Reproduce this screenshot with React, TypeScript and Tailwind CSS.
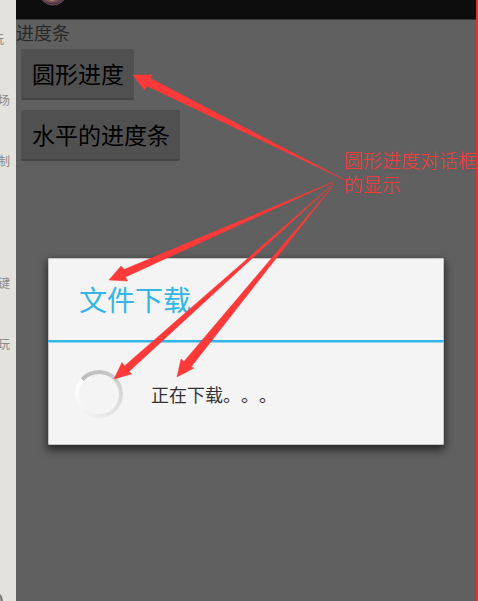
import React from "react";

const sideLinks = [
  { id: 1, label: "玩", shifted: true },
  { id: 2, label: "场", shifted: false },
  { id: 3, label: "制", shifted: false },
  { id: 4, label: "", shifted: false },
  { id: 5, label: "键", shifted: false },
  { id: 6, label: "玩", shifted: false },
];

const arrows = [
  "345,180 150.5,78.5 152,75 133,75 144.5,90 147,86",
  "333,182 124,269.5 121,266 109,280 127.5,281 125.5,277",
  "333,184 124.5,366 122,362.5 114,379 131.5,374 129,371.5",
  "332,187 184,361.5 181,359 177,377 194,368 191,367",
];

const Sidebar = () => {
  return (
    <aside className="relative w-4 shrink-0 overflow-hidden bg-[#e3e2dd] pt-2">
      <ul className="flex flex-col text-xs text-[#8a8a8a]">
        {sideLinks.map((link) => (
          <li
            key={link.id}
            className={`h-[61px] flex justify-end items-center ${
              link.shifted ? "pr-3" : "pr-1.5"
            }`}
          >
            {link.label}
          </li>
        ))}
      </ul>
      <div className="absolute -left-5 -bottom-3 size-[23px] rounded-full border-2 border-[#777777] bg-[#aaaaaa]"></div>
    </aside>
  );
};

const TitleBar = () => {
  return (
    <header className="h-5 shrink-0 bg-[#0d0d0d] border-b border-[#353535] pl-[22px] overflow-hidden">
      <svg
        className="-mt-[22px] block"
        width="30"
        height="28"
        viewBox="0 0 30 28"
        fill="none"
      >
        <circle cx="15" cy="13" r="14" fill="#3c2633" stroke="#71515f" />
        <path d="M4 19a12 9 0 0 0 22 0" stroke="#6b3f5c" strokeWidth="2" />
        <ellipse cx="14" cy="20" rx="8" ry="4" fill="#7c5a50" />
        <ellipse cx="14" cy="21" rx="3" ry="2" fill="#a08078" />
      </svg>
    </header>
  );
};

const Spinner = () => {
  return (
    <div
      role="status"
      aria-label="正在下载"
      className="size-12 shrink-0 rounded-full bg-[conic-gradient(from_-50deg,#bdbdbd,#c6c6c6_20%,#dedede_45%,#ececec_65%,#f6f6f6_80%,#ffffff)] p-1"
    >
      <div className="size-full rounded-full bg-[#f4f4f4]"></div>
    </div>
  );
};

const ProgressDialog = () => {
  return (
    <section
      role="dialog"
      aria-labelledby="dialog-title"
      className="absolute top-[258px] left-8 right-8 rounded-xs bg-[#f4f4f4] shadow-[inset_0_0_0_1px_#c4c4c4,0_4px_9px_1px_rgba(0,0,0,0.6)]"
    >
      <h2
        id="dialog-title"
        className="h-[82px] pl-[31px] flex items-center text-[28px] text-[#33b5e5]"
      >
        文件下载
      </h2>
      <div className="h-[3px] bg-[#33b5e5] border-b border-[#8fd4ee]"></div>
      <div className="h-[102px] pl-[27px] flex items-center gap-7">
        <Spinner />
        <p className="text-lg text-[#333333] [text-spacing-trim:space-all]">
          正在下载。。。
        </p>
      </div>
    </section>
  );
};

const App = () => {
  const buttonStyle =
    "h-[51px] pl-[11px] pr-2.5 rounded-xs bg-[#505050] border-b-2 border-[#444444] text-[23px] text-black";

  return (
    <div className="relative flex min-h-screen overflow-hidden bg-[#606060] font-['Noto_Sans_CJK_SC',sans-serif]">
      <Sidebar />
      <div className="relative flex-1 flex flex-col border-r-2 border-[#e03030]">
        <TitleBar />
        <main className="flex flex-col items-start">
          <h1 className="text-lg leading-6 text-[#292929]">进度条</h1>
          <div className="pl-[5px] pt-[5px] flex flex-col items-start gap-2.5">
            <button type="button" className={buttonStyle}>
              圆形进度
            </button>
            <button type="button" className={buttonStyle}>
              水平的进度条
            </button>
          </div>
        </main>
        <ProgressDialog />
      </div>

      <p className="absolute top-[148px] left-[344px] w-[134px] text-[19px] leading-6 font-light text-[#ff3838]">
        圆形进度对话框的显示
      </p>
      <svg
        className="absolute top-0 left-0 pointer-events-none"
        width="478"
        height="601"
        viewBox="0 0 478 601"
        fill="#fd3939"
        aria-hidden="true"
      >
        {arrows.map((points) => (
          <polygon
            key={points}
            points={points}
            stroke="#fd3939"
            strokeWidth="0.5"
          />
        ))}
      </svg>
    </div>
  );
};

export default App;
